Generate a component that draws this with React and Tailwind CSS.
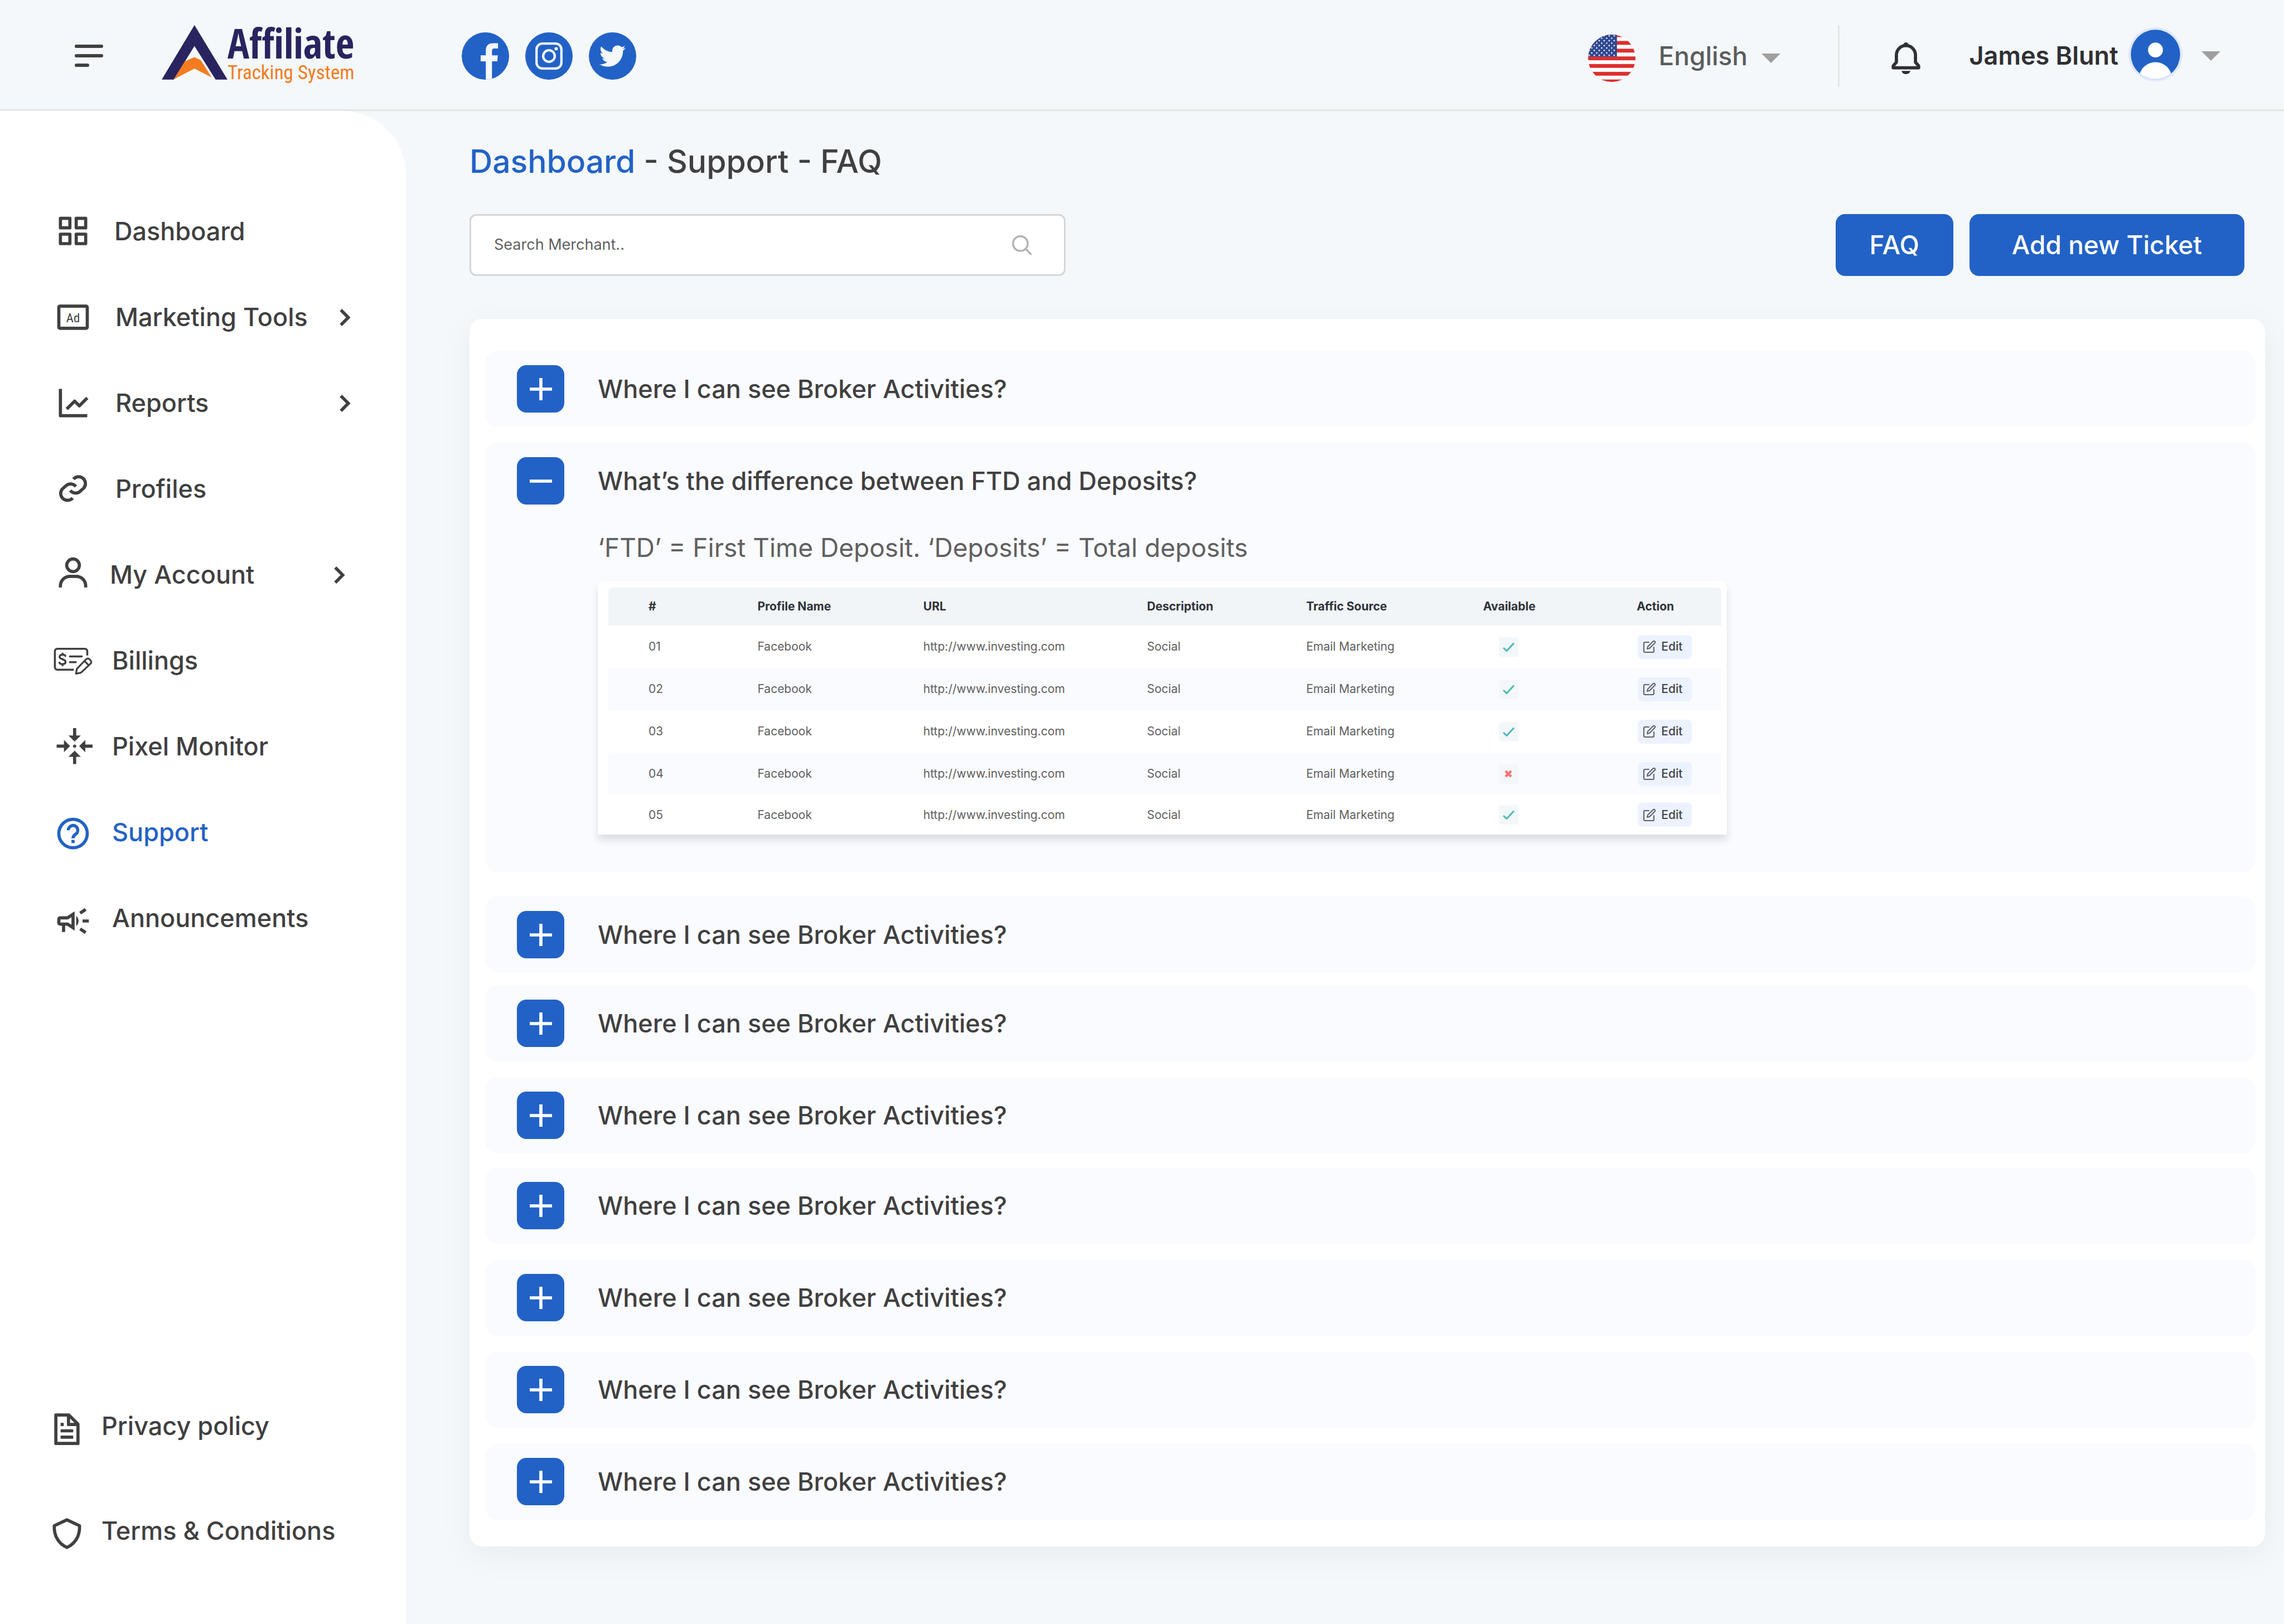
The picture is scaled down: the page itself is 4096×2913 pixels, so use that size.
import { useState } from "react";
import { FiEdit } from "react-icons/fi";
import { FaTwitter } from "react-icons/fa";

const QUESTION = "Where I can see Broker Activities?";

const FAQ_ITEMS = [
  { title: QUESTION, space: "" },
  { title: "What’s the difference between FTD and Deposits?", space: "mt-7", answer: true },
  { title: QUESTION, space: "mt-[43px]" },
  { title: QUESTION, space: "mt-[22px]" },
  { title: QUESTION, space: "mt-7" },
  { title: QUESTION, space: "mt-[25px]" },
  { title: QUESTION, space: "mt-7" },
  { title: QUESTION, space: "mt-7" },
  { title: QUESTION, space: "mt-7" },
];

const PROFILES = [
  { id: "01", available: true },
  { id: "02", available: true },
  { id: "03", available: true },
  { id: "04", available: false },
  { id: "05", available: true },
];

function NavGlyph({ children }) {
  return (
    <svg viewBox="0 0 96 96" className="size-[68px] shrink-0 overflow-visible" fill="none" stroke="currentColor" strokeWidth="8" aria-hidden="true">
      {children}
    </svg>
  );
}

const glyphs = {
  dashboard: (
    <NavGlyph>
      {[[16, 15], [56, 15], [16, 55], [56, 55]].map(([x, y]) => (
        <rect key={`${x}-${y}`} x={x} y={y} width="24" height="24" strokeLinejoin="round" />
      ))}
    </NavGlyph>
  ),
  ad: (
    <NavGlyph>
      <rect x="12" y="20" width="72" height="56" rx="3" />
      <text x="48" y="60" textAnchor="middle" fontSize="32" fill="currentColor" stroke="none" className="font-['Roboto_Condensed','Roboto',sans-serif] font-normal">
        Ad
      </text>
    </NavGlyph>
  ),
  chart: (
    <NavGlyph>
      <path d="M16 12V80H84" strokeLinejoin="round" />
      <path d="M32 63L52 43L64 55L84 35" strokeLinejoin="round" />
    </NavGlyph>
  ),
  link: (
    <NavGlyph>
      <path d="M49 23A17 17 0 0 1 75 46L66.500 53.500A17 17 0 0 1 41 52" />
      <path d="M49 23A17 17 0 0 1 75 46L66.500 53.500A17 17 0 0 1 41 52" transform="rotate(180 48 47)" />
    </NavGlyph>
  ),
  user: (
    <NavGlyph>
      <circle cx="48" cy="24" r="16" />
      <path d="M16 80V76A24 24 0 0 1 40 52H56A24 24 0 0 1 80 76V80" />
    </NavGlyph>
  ),
  billing: (
    <NavGlyph>
      <g strokeWidth="5" strokeLinecap="round" strokeLinejoin="round">
        <path d="M84 35V24a6 6 0 0 0-6-6H8a6 6 0 0 0-6 6V65a6 6 0 0 0 6 6H50" strokeLinecap="butt" />
        <path d="M40 37.500H70M40 52H55" />
        <path d="M28.500 36C27 31.500 14 31 14 38.500C14 46 29 43 29 51C29 58.500 15.500 58 13.500 53M21.500 30V33M21.500 57V60" />
        <path d="M55.500 81L57.500 69L81 44.500Q86 40.500 90 44.500L92.500 47.500Q96 52 92 56L68 78.500ZM77 49L88 60" strokeWidth="4.500" />
      </g>
    </NavGlyph>
  ),
  pixel: (
    <NavGlyph>
      <g fill="currentColor" stroke="none">
        <circle cx="52" cy="47" r="4" />
        {[0, 90, 180, 270].map((turn) => (
          <path key={turn} d="M48 1.500H56V20H67.500L52 35.500L36.500 20H48Z" transform={`rotate(${turn} 52 47)`} />
        ))}
      </g>
    </NavGlyph>
  ),
  support: (
    <NavGlyph>
      <circle cx="48" cy="51" r="36" />
      <path d="M36 43A12 12 0 1 1 54 53Q48 57 48 63M48 67V75" />
    </NavGlyph>
  ),
  horn: (
    <NavGlyph>
      <path d="M48 38L34 47H16Q12 47 12 51V59Q12 63 16 63H34L48 72Z" />
      <path d="M24 64V83M72 55H88M66 35L80 25.500M66 75L80 84.500" />
      <path d="M56 42A17 17 0 0 1 56 68Z" fill="currentColor" stroke="none" />
    </NavGlyph>
  ),
  file: (
    <NavGlyph>
      <path d="M53 20H20V92H76V43ZM52 20V44H76" strokeLinejoin="round" />
      <path d="M32 44H40M32 60H64M32 76H64" />
    </NavGlyph>
  ),
  shield: (
    <NavGlyph>
      <path d="M48 20L80 35C81 62 68 81 48 90C28 81 15 62 16 35Z" strokeLinejoin="round" />
    </NavGlyph>
  ),
};

const NAV = [
  { label: "Dashboard", icon: "dashboard", gap: "gap-10" },
  { label: "Marketing Tools", icon: "ad", gap: "gap-[42px]", more: true },
  { label: "Reports", icon: "chart", gap: "gap-[42px]", more: true },
  { label: "Profiles", icon: "link", gap: "gap-[42px]" },
  { label: "My Account", icon: "user", gap: "gap-8", more: true },
  { label: "Billings", icon: "billing", gap: "gap-9" },
  { label: "Pixel Monitor", icon: "pixel", gap: "gap-9" },
  { label: "Support", icon: "support", gap: "gap-9", active: true },
  { label: "Announcements", icon: "horn", gap: "gap-9" },
];

function Caret() {
  return (
    <svg viewBox="0 0 34 17" className="h-[17px] w-[34px]" aria-hidden="true">
      <path d="M0 0H34L17 17Z" fill="#9f9f9f" />
    </svg>
  );
}

function UsFlag() {
  const stars = [];
  for (let row = 0; row < 9; row += 1) {
    for (let col = 0; col < 6; col += 1) {
      stars.push([3 + col * 12.6 + (row % 2) * 6.3, 3 + row * 6.2]);
    }
  }
  return (
    <svg viewBox="0 0 120 120" className="mt-2 size-[85px]" role="img" aria-label="United States flag">
      <defs>
        <clipPath id="flag-circle">
          <circle cx="60" cy="60" r="60" />
        </clipPath>
      </defs>
      <g clipPath="url(#flag-circle)">
        <rect width="120" height="120" fill="#fff" />
        {[-3.4, 16.2, 35.8, 55.4, 74.6, 94.4, 113.8].map((y) => (
          <rect key={y} y={y} width="120" height="9.7" fill="#dc2f2f" />
        ))}
        <rect width="73" height="56" fill="#2f4893" />
        {stars
          .filter(([x]) => x < 72)
          .map(([x, y]) => (
            <path key={`${x}-${y}`} d="M0-3L.8-.9H2.900L1.200.4L1.800 2.500L0 1.200L-1.800 2.500L-1.200.4L-2.900-.9H-.8Z" fill="#fff" transform={`translate(${x} ${y})`} />
          ))}
      </g>
    </svg>
  );
}

function Logo() {
  return (
    <a href="#home" className="flex items-start" aria-label="Affiliate Tracking System">
      <svg viewBox="0 0 166 138" className="mt-1 h-[98px] w-[118px]" aria-hidden="true">
        <path d="M82.600 0L166 137.500H136L82.600 52.700L30.300 137.500H0Z" fill="#29235f" />
        <path d="M82.600 81L98.800 88.700L126 132L82.600 109.700L30.300 137L58 92Z" fill="#f47b20" />
      </svg>
      <span className="flex flex-col">
        <span className="font-['Open_Sans_Condensed','Open_Sans',sans-serif] text-[73px] leading-[72px] font-bold text-[#29235f]">Affiliate</span>
        <span className="font-['Roboto_Condensed','Roboto',sans-serif] text-[35px] leading-9 text-[#f47b20]">Tracking System</span>
      </span>
    </a>
  );
}

function Socials() {
  return (
    <div className="flex gap-[29px] text-[#f4f8fb]">
      <a href="#facebook" aria-label="Facebook" className="size-[85px] overflow-hidden rounded-full bg-[#2262c6]">
        <svg viewBox="0 0 120 120" className="size-full" fill="currentColor">
          <path d="M61 125V73.300H48V58.300H61V45C61 34 68 27.500 79 27.500H92V41H83C78 41 76.700 43.500 76.700 47V58.300H91.500L90 73.300H76.700V125Z" />
        </svg>
      </a>
      <a href="#instagram" aria-label="Instagram" className="size-[85px] rounded-full bg-[#2262c6]">
        <svg viewBox="0 0 120 120" className="size-full" fill="none" stroke="currentColor" strokeWidth="6">
          <rect x="28.500" y="28.500" width="63" height="63" rx="15" />
          <circle cx="60" cy="60" r="14.700" />
          <circle cx="78.300" cy="41.700" r="4.300" fill="currentColor" stroke="none" />
        </svg>
      </a>
      <a href="#twitter" aria-label="Twitter" className="flex size-[85px] items-center justify-center rounded-full bg-[#2262c6]">
        <FaTwitter className="size-[47px]" />
      </a>
    </div>
  );
}

function Header() {
  return (
    <header className="flex h-[199px] items-center border-b-[3px] border-[#e5e5e5] pt-1 pr-[114px] pl-[134px]">
      <button type="button" aria-label="Toggle menu" className="flex w-[51px] flex-col gap-[11px]">
        <span className="h-1.5 w-full rounded-full bg-[#404040]" />
        <span className="h-1.5 w-full rounded-full bg-[#404040]" />
        <span className="h-1.5 w-1/2 rounded-full bg-[#404040]" />
      </button>
      <div className="ml-[105px] w-[538px] pb-2.5">
        <Logo />
      </div>
      <Socials />

      <div className="ml-auto flex items-center">
        <UsFlag />
        <div className="relative ml-[41px] flex items-center">
          <select aria-label="Language" className="w-[219px] appearance-none bg-transparent text-[46px] leading-[60px] font-medium text-[#5c5c5c]">
            <option>English</option>
          </select>
          <span className="pointer-events-none absolute inset-y-0 right-0 flex items-center pt-2">
            <Caret />
          </span>
        </div>
        <span className="ml-[103px] h-[111px] w-[3px] bg-[#e5e5e5]" />
        <button type="button" aria-label="Notifications" className="mt-2 ml-[93px]">
          <svg viewBox="0 0 72 80" className="h-[57px] w-[52px]" fill="none" stroke="#2f3033" strokeWidth="8">
            <path d="M12 50V32a24 24 0 0 1 48 0v18l8 9v5H4v-5Z" strokeLinejoin="round" />
            <path d="M25 72H47a11 8 0 0 1-22 0Z" fill="#2f3033" stroke="none" />
            <circle cx="36" cy="6" r="6" fill="#2f3033" stroke="none" />
          </svg>
        </button>
        <button type="button" className="ml-[87px] flex items-center text-[45px] leading-[60px] font-semibold text-[#2f3033]">
          James Blunt
          <svg viewBox="0 0 136 136" className="mb-1.5 ml-[18px] size-[97px]" aria-hidden="true">
            <defs>
              <clipPath id="avatar-circle">
                <circle cx="68" cy="68" r="62" />
              </clipPath>
            </defs>
            <circle cx="68" cy="68" r="68" fill="#dfe8ff" />
            <circle cx="68" cy="68" r="62" fill="#2262c6" />
            <g clipPath="url(#avatar-circle)" fill="#fff">
              <circle cx="68" cy="57" r="18.700" />
              <circle cx="68" cy="129" r="41.500" />
            </g>
          </svg>
          <span className="ml-[34px]">
            <Caret />
          </span>
        </button>
      </div>
    </header>
  );
}

function Sidebar() {
  return (
    <aside className="flex w-[728px] shrink-0 flex-col justify-between rounded-tr-[114px] bg-white pt-[139px] pb-[74px] text-[45px] font-medium text-[#404040]">
      <nav aria-label="Main">
        {NAV.map(({ label, icon, gap, more, active }) => (
          <a key={label} href="#nav" aria-current={active ? "page" : undefined} className={`flex h-[154px] items-center pl-[97px] ${gap} ${active ? "text-[#2262c6]" : ""}`}>
            {glyphs[icon]}
            <span className="flex items-center">
              <span className="w-[402px]">{label}</span>
              {more && (
                <svg viewBox="0 0 28 44" className="h-[31px] w-5" fill="none" stroke="currentColor" strokeWidth="8" aria-hidden="true">
                  <path d="M3 3L22 22L3 41" />
                </svg>
              )}
            </span>
          </a>
        ))}
      </nav>
      <nav aria-label="Legal">
        <a href="#privacy" className="flex h-[188px] items-center gap-7 pl-[86px]">
          {glyphs.file}
          Privacy policy
        </a>
        <a href="#terms" className="flex h-[188px] items-center gap-7 pl-[86px]">
          {glyphs.shield}
          Terms &amp; Conditions
        </a>
      </nav>
    </aside>
  );
}

function Available({ yes }) {
  return (
    <span className="ml-7 flex size-[35px] items-center justify-center rounded-sm bg-[#f3f7fa]">
      {yes ? (
        <svg viewBox="0 0 21 17" className="h-[17px] w-[21px]" role="img" aria-label="Available">
          <path d="M1 10L7 15.500L20 1.500" fill="none" stroke="#4cb9b5" strokeWidth="3" />
        </svg>
      ) : (
        <svg viewBox="0 0 14 14" className="size-3.5" role="img" aria-label="Not available">
          <path d="M2 2L12 12M12 2L2 12" fill="none" stroke="#ff6b6b" strokeWidth="4" />
        </svg>
      )}
    </span>
  );
}

function ProfileTable() {
  return (
    <div className="mt-[30px] ml-[202px] max-w-[2025px] rounded-t-xl bg-white pt-3 pr-2.5 pl-[19px] shadow-[0_10px_14px_rgba(0,0,0,0.12)]">
      <table className="w-full table-fixed text-left text-[21px] text-[#606060]">
        <colgroup>
          <col className="w-[13.4%]" />
          <col className="w-[14.9%]" />
          <col className="w-[20.1%]" />
          <col className="w-[14.3%]" />
          <col className="w-[15.9%]" />
          <col className="w-[13.8%]" />
          <col className="w-[7.6%]" />
        </colgroup>
        <thead>
          <tr className="h-[68px] bg-[#f1f5f8] font-semibold text-[#303238]">
            <th className="rounded-tl-lg pl-[72px]">#</th>
            <th>Profile Name</th>
            <th>URL</th>
            <th>Description</th>
            <th>Traffic Source</th>
            <th>Available</th>
            <th className="rounded-tr-lg">Action</th>
          </tr>
        </thead>
        <tbody>
          {PROFILES.map(({ id, available }) => (
            <tr key={id} className="h-[76px] last:h-[71px] even:bg-[#fafbff]">
              <td className="pl-[72px]">{id}</td>
              <td>Facebook</td>
              <td>http://www.investing.com</td>
              <td>Social</td>
              <td>Email Marketing</td>
              <td>
                <Available yes={available} />
              </td>
              <td>
                <button type="button" className="ml-0.5 flex h-[43px] w-[97px] items-center gap-[9px] rounded-lg bg-[#ecf2ff] pl-[9px] font-medium text-[#404248]">
                  <FiEdit className="size-6 text-[#5d6068]" aria-hidden="true" />
                  Edit
                </button>
              </td>
            </tr>
          ))}
        </tbody>
      </table>
    </div>
  );
}

function FaqItem({ item, open, onToggle }) {
  return (
    <section className={`rounded-[23px] bg-[#fafbff] ${item.space}`}>
      <h2>
        <button type="button" aria-expanded={open} onClick={onToggle} className="flex w-full items-center gap-[60px] py-[26px] pl-[57px] text-left">
          <span className="flex size-[85px] items-center justify-center rounded-[17px] bg-[#2262c6]">
            <svg viewBox="0 0 56 56" className="size-10" stroke="#fff" strokeWidth="8" aria-hidden="true">
              <path d={open ? "M0 28H56" : "M0 28H56M28 0V56"} />
            </svg>
          </span>
          <span className="text-[45px] leading-[60px] font-medium text-[#404040]">{item.title}</span>
        </button>
      </h2>
      {open && item.answer && (
        <div className="pt-[21px] pb-[68px]">
          <p className="pl-[202px] text-[46px] leading-[60px] text-[#606060]">‘FTD’ = First Time Deposit. ‘Deposits’ = Total deposits</p>
          <ProfileTable />
        </div>
      )}
    </section>
  );
}

export default function App() {
  const [openIndex, setOpenIndex] = useState(1);
  return (
    <div className="flex min-h-screen flex-col bg-[#f4f8fb] font-['Inter',sans-serif]">
      <Header />
      <div className="flex flex-1">
        <Sidebar />
        <main className="min-w-0 flex-1 pt-[57px] pr-[34px] pb-[140px] pl-[114px]">
          <h1 className="text-[57px] leading-[68px] font-medium text-[#404040]">
            <a href="#dashboard" className="text-[#2262c6]">Dashboard</a> - Support - FAQ
          </h1>
          <div className="mt-[60px] flex items-center gap-[29px] pr-[37px]">
            <label className="mr-auto flex h-[111px] w-[1069px] items-center rounded-xl border-[3px] border-[#d6d6d6] bg-white pr-[57px] pl-[41px]">
              <input type="search" aria-label="Search Merchant" placeholder="Search Merchant.." className="min-w-0 flex-1 bg-transparent text-[27px] outline-none placeholder:text-[#606060]" />
              <svg viewBox="0 0 52 52" className="size-9" fill="none" stroke="#b3b3b3" strokeWidth="5" aria-hidden="true">
                <circle cx="21.500" cy="21.500" r="19" />
                <path d="M35 35L50 50" />
              </svg>
            </label>
            <button type="button" className="h-[111px] rounded-[17px] bg-[#2262c6] px-[61px] text-[46px] font-medium text-white">FAQ</button>
            <button type="button" className="h-[111px] rounded-[17px] bg-[#2262c6] px-[76px] text-[46px] font-medium text-white">Add new Ticket</button>
          </div>
          <div className="mt-[77px] rounded-[23px] bg-white pt-[57px] pr-[17px] pb-12 pl-7 shadow-[0_14px_64px_rgba(0,0,0,0.05)]">
            {FAQ_ITEMS.map((item, index) => (
              <FaqItem key={index} item={item} open={index === openIndex} onToggle={() => setOpenIndex(index === openIndex ? -1 : index)} />
            ))}
          </div>
        </main>
      </div>
    </div>
  );
}
